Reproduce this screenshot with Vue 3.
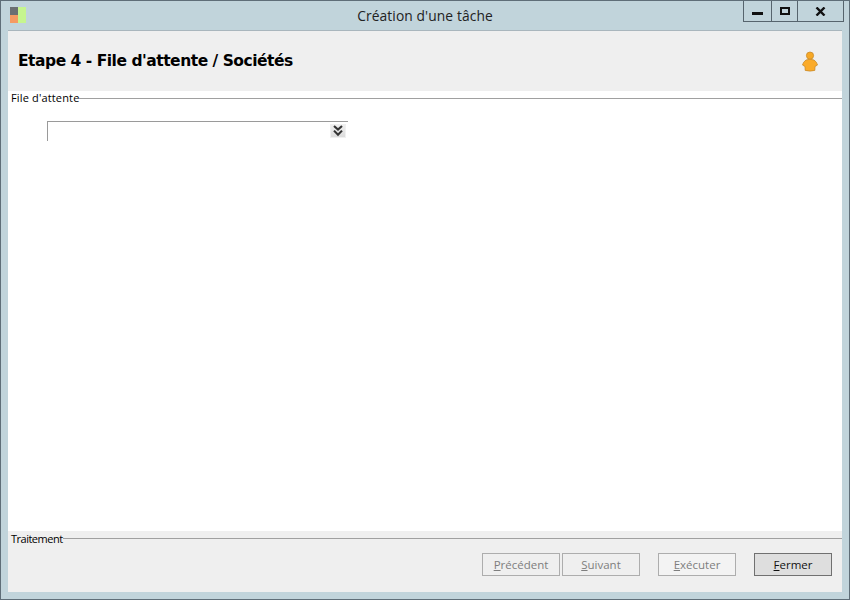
<script setup>
const buttons = [
  { k: 'P', r: 'récédent', cls: 'b1' },
  { k: 'S', r: 'uivant', cls: 'b2' },
  { k: 'E', r: 'xécuter', cls: 'b3' },
  { k: 'F', r: 'ermer', cls: 'b4' },
]
</script>

<template>
  <div class="win">
    <div class="titlebar">
      <div class="left">
        <svg width="16" height="16" viewBox="0 0 16 16" class="appicon">
          <rect x="0" y="0" width="8" height="8" fill="#6b6f72" />
          <rect x="0" y="8" width="8" height="8" fill="#f59a62" />
          <rect x="8" y="8" width="1" height="8" fill="#8a8f80" />
          <rect x="8" y="0" width="8" height="16" fill="#c6f58e" />
        </svg>
      </div>
      <div class="title">Création d'une tâche</div>
      <div class="controls">
        <div class="ctl c-min"><span class="min"></span></div>
        <div class="ctl c-max"><span class="max"></span></div>
        <div class="ctl c-close">
          <svg width="11" height="9" viewBox="0 0 11 9"><path d="M1.5 .5 L9.5 8.5 M9.5 .5 L1.5 8.5" stroke="#111" stroke-width="2.4" fill="none" /></svg>
        </div>
      </div>
    </div>
    <div class="client">
      <header class="head">
        <h1>Etape 4 - File d'attente / Sociétés</h1>
        <svg class="person" width="18" height="21" viewBox="0 0 18 21">
          <path d="M5 9 Q9 7.5 13 9 Q16 11 16.5 14 L14 15.5 L13.8 19.4 Q9 20.8 4.2 19.4 L4 15.5 L1.5 14 Q2 11 5 9 Z" fill="#fbab2a" stroke="#c98a2a" stroke-width=".8" />
          <circle cx="9" cy="4.6" r="3.6" fill="#f7a825" stroke="#c98a2a" stroke-width=".8" />
        </svg>
      </header>
      <main class="body">
        <div class="legend top"><span>File d'attente</span><i></i></div>
        <div class="combo">
          <span class="arrow">
            <svg width="12" height="12" viewBox="0 0 12 12"><path d="M2 1 L6 4.6 L10 1 M2 5.6 L6 9.8 L10 5.6" stroke="#333" stroke-width="2.1" fill="none" /></svg>
          </span>
        </div>
      </main>
      <footer class="foot">
        <div class="legend bottom"><span>Traitement</span><i></i></div>
        <div class="actions">
          <button v-for="b in buttons" :key="b.k" :class="['btn', b.cls]"><u>{{ b.k }}</u>{{ b.r }}</button>
        </div>
      </footer>
    </div>
  </div>
</template>

<style>
html, body { margin: 0; padding: 0; }
</style>

<style scoped>
.win {
  width: 850px;
  height: 600px;
  box-sizing: border-box;
  background: #c1d4db;
  border: 1px solid #5f6e78;
  padding: 0 7px 7px 7px;
  display: flex;
  flex-direction: column;
  font-family: "DejaVu Sans", Verdana, sans-serif;
  color: #111;
}
.titlebar {
  height: 29px;
  flex: none;
  display: grid;
  grid-template-columns: 1fr auto 1fr;
  box-sizing: border-box;
}
.left { padding: 6px 0 0 2px; }
.appicon { display: block; }
.title {
  font-family: "Open Sans", sans-serif;
  font-size: 13.8px;
  line-height: 19px;
  padding-top: 5px;
  color: #222;
  letter-spacing: 0.1px;
}
.controls { display: flex; justify-content: flex-end; align-items: flex-start; margin-right: -2px; }
.ctl {
  height: 20px;
  box-sizing: content-box;
  border: 1px solid #56646d;
  border-top: 0;
  border-left-width: 0;
  display: flex;
  align-items: center;
  justify-content: center;
}
.c-min { width: 27px; border-left-width: 1px; }
.c-max { width: 25px; }
.c-close { width: 45px; }
.min { width: 11px; height: 3px; background: #111; margin-top: 5px; }
.max { width: 6px; height: 4px; border: 2px solid #111; }
.client {
  flex: 1;
  display: flex;
  flex-direction: column;
  min-height: 0;
  border-top: 1px solid #a9b6bd;
}
.head {
  height: 60px;
  flex: none;
  background: #efefef;
  display: flex;
  align-items: center;
  justify-content: space-between;
  padding: 0 23px 0 10px;
}
h1 {
  margin: 0;
  font-family: "DejaVu Sans", Verdana, sans-serif;
  font-size: 15.5px;
  letter-spacing: -0.48px;
  font-weight: 700;
  color: #000;
}
.body { flex: 1; background: #fff; min-height: 0; }
.legend {
  display: flex;
  align-items: center;
  height: 14px;
  padding-left: 3px;
  font-family: "Open Sans", sans-serif;
  font-size: 11px;
  line-height: 14px;
  color: #000;
}
.top span { letter-spacing: 0.15px; }
.bottom span { letter-spacing: -0.5px; position: relative; top: 1px; }
.legend i { flex: 1; height: 1px; background: #a0a0a0; }
.combo {
  margin: 16px 0 0 39px;
  width: 300px;
  height: 19px;
  border-top: 1px solid #9a9a9a;
  border-left: 1px solid #9a9a9a;
  display: flex;
  justify-content: flex-end;
  align-items: flex-start;
  box-sizing: content-box;
}
.arrow {
  width: 16px;
  height: 14px;
  margin: 2px 2px 0 0;
  background: linear-gradient(#efefef, #dcdcdc);
  border: 1px solid #f0f0f0;
  box-sizing: border-box;
  display: flex;
  align-items: center;
  justify-content: center;
}
.foot { height: 61px; flex: none; background: #efefef; }
.actions {
  display: flex;
  justify-content: flex-end;
  align-items: flex-start;
  padding: 8px 10px 0 0;
}
.btn {
  height: 23px;
  width: 78px;
  box-sizing: border-box;
  border: 1px solid #adadad;
  background: #efefef;
  color: #7e7e7e;
  font-family: "Open Sans", sans-serif;
  font-size: 11.5px;
  padding: 0;
  margin: 0;
}
.b2 { margin-left: 2px; }
.b3 { margin-left: 18px; background: #f3f3f3; }
.b4 { margin-left: 18px; border-color: #707070; background: #dedede; color: #111; }
</style>
